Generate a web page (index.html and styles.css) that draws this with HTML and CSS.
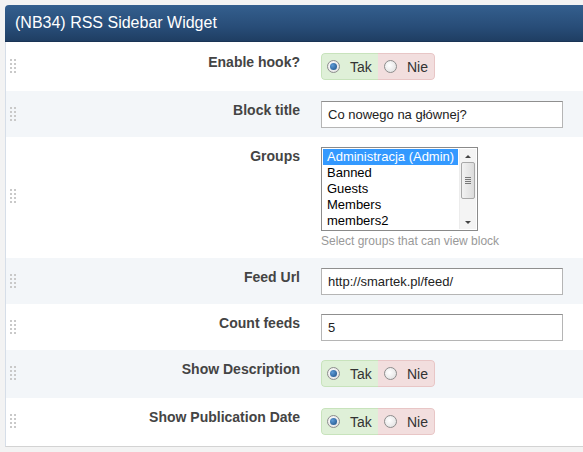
FILE: index.html
```html
<!DOCTYPE html>
<html>
<head>
<meta charset="utf-8">
<link rel="stylesheet" href="styles.css">
</head>
<body>
<div class="panel">
  <div class="header">(NB34) RSS Sidebar Widget</div>
  <div class="rows">
    <div class="row r-hook">
      <div class="handle"></div>
      <div class="label">Enable hook?</div>
      <div class="control">
        <div class="yesno">
          <span class="yes"><span class="radio on"></span>Tak</span>
          <span class="no"><span class="radio"></span>Nie</span>
        </div>
      </div>
    </div>
    <div class="row alt">
      <div class="handle"></div>
      <div class="label">Block title</div>
      <div class="control"><div class="input">Co nowego na głównej?</div></div>
    </div>
    <div class="row r-groups">
      <div class="handle mid"></div>
      <div class="label">Groups</div>
      <div class="control">
        <div class="listbox">
          <div class="options">
            <div class="opt sel">Administracja (Admin)</div>
            <div class="opt">Banned</div>
            <div class="opt">Guests</div>
            <div class="opt">Members</div>
            <div class="opt">members2</div>
          </div>
          <div class="scroll">
            <div class="arrow up"></div>
            <div class="thumb"><i></i><i></i><i></i><i></i></div>
            <div class="arrow down"></div>
          </div>
        </div>
        <div class="help">Select groups that can view block</div>
      </div>
    </div>
    <div class="row alt">
      <div class="handle"></div>
      <div class="label">Feed Url</div>
      <div class="control"><div class="input">http://smartek.pl/feed/</div></div>
    </div>
    <div class="row">
      <div class="handle"></div>
      <div class="label">Count feeds</div>
      <div class="control"><div class="input">5</div></div>
    </div>
    <div class="row alt r-tall">
      <div class="handle"></div>
      <div class="label">Show Description</div>
      <div class="control">
        <div class="yesno">
          <span class="yes"><span class="radio on"></span>Tak</span>
          <span class="no"><span class="radio"></span>Nie</span>
        </div>
      </div>
    </div>
    <div class="row r-tall">
      <div class="handle"></div>
      <div class="label">Show Publication Date</div>
      <div class="control">
        <div class="yesno">
          <span class="yes"><span class="radio on"></span>Tak</span>
          <span class="no"><span class="radio"></span>Nie</span>
        </div>
      </div>
    </div>
  </div>
</div>
</body>
</html>
```
FILE: styles.css
```css
html, body {
  margin: 0;
  padding: 0;
  overflow: hidden;
}
body {
  background: #f3f3f3;
  font-family: "Liberation Sans", Arial, sans-serif;
  font-size: 13px;
  color: #333;
  width: 583px;
  height: 452px;
  padding: 5px 0 0 5px;
  box-sizing: border-box;
}
.panel {
  width: 610px;
  background: #fff;
  border-left: 1px solid #d6dee8;
  border-bottom: 1px solid #d3d3d3;
  border-top-left-radius: 4px;
}
.header {
  height: 37px;
  box-sizing: border-box;
  padding: 8px 0 0 10px;
  background: linear-gradient(#345f8e, #284d78 60%, #1f3e63);
  border-bottom: 1px solid #1a3455;
  border-top-left-radius: 4px;
  color: #fff;
  font-size: 16px;
  line-height: 19px;
  margin-left: -1px;
}
.row {
  display: flex;
  align-items: flex-start;
  padding: 10px 0 9px 0;
  min-height: 27px;
  position: relative;
}
.row.r-hook { padding-top: 11px; padding-bottom: 11px; }
.row.alt { background: #f3f6f9; }
.row.r-groups { padding-bottom: 10px; }
.row.r-tall { padding-top: 10px; padding-bottom: 11px; }
.handle {
  width: 6px;
  height: 14px;
  margin: 6px 0 0 4px;
  background-image: radial-gradient(circle, #c9c9c9 0.9px, transparent 1.2px);
  background-size: 4px 4px;
  background-position: -1px -1px;
  flex: none;
}
.handle.mid { margin-top: 42px; }
.label {
  width: 284px;
  flex: none;
  text-align: right;
  font-weight: bold;
  font-size: 14px;
  color: #444;
  padding-top: 1px;
  line-height: 16px;
}
.control {
  margin-left: 21px;
}
.yesno {
  display: flex;
  height: 27px;
  box-sizing: border-box;
  border-radius: 4px;
  overflow: hidden;
  font-size: 14px;
  color: #333;
}
.yesno .yes, .yesno .no {
  display: flex;
  align-items: center;
  width: 57px;
  box-sizing: border-box;
}
.yesno .yes {
  background: #dff0d8;
  border: 1px solid #c8e3bc;
  border-right: none;
  border-radius: 4px 0 0 4px;
  padding-left: 5px;
}
.yesno .no {
  background: #f2dede;
  border: 1px solid #e8c6c6;
  border-left: none;
  border-radius: 0 4px 4px 0;
  padding-left: 6px;
}
.radio {
  width: 13px;
  height: 13px;
  box-sizing: border-box;
  border-radius: 50%;
  border: 1px solid #8d8d8d;
  background: radial-gradient(circle at 40% 40%, #fff, #dcdcdc);
  margin-right: 10px;
  position: relative;
  flex: none;
}
.radio.on::after {
  content: "";
  position: absolute;
  left: 2px;
  top: 2px;
  width: 7px;
  height: 7px;
  border-radius: 50%;
  background: radial-gradient(circle at 35% 35%, #5d9ad6, #1d4f86);
}
.input {
  width: 242px;
  height: 27px;
  box-sizing: border-box;
  border: 1px solid #b5b5b5;
  border-top-color: #8f8f8f;
  background: #fff;
  padding: 0 6px;
  line-height: 25px;
  font-size: 13px;
  color: #222;
}
.listbox {
  width: 157px;
  height: 84px;
  box-sizing: border-box;
  border: 1px solid #8a8a8a;
  background: #fff;
  display: flex;
  padding: 1px;
}
.options {
  flex: 1;
}
.opt {
  height: 16px;
  line-height: 16px;
  padding-left: 4px;
  font-size: 13px;
  color: #000;
  white-space: nowrap;
}
.opt.sel {
  background: #3399ff;
  color: #fff;
  margin-right: 1px;
}
.scroll {
  width: 16px;
  background: #f4f4f4;
  border-left: 1px solid #ececec;
  display: flex;
  flex-direction: column;
  align-items: center;
}
.arrow {
  width: 0;
  height: 0;
  border-left: 3px solid transparent;
  border-right: 3px solid transparent;
}
.arrow.up {
  border-bottom: 3px solid #444;
  margin-top: 6px;
}
.arrow.down {
  border-top: 3px solid #444;
  margin-top: auto;
  margin-bottom: 5px;
}
.thumb {
  width: 14px;
  height: 37px;
  margin-top: 4px;
  box-sizing: border-box;
  border: 1px solid #a8a8a8;
  border-radius: 2px;
  background: linear-gradient(90deg, #f2f2f2, #dcdcdc);
  display: flex;
  flex-direction: column;
  align-items: center;
  justify-content: center;
  gap: 1px;
}
.thumb i {
  display: block;
  width: 6px;
  height: 1px;
  background: #777;
}
.help {
  margin-top: 3px;
  font-size: 12px;
  color: #999;
  line-height: 14px;
}
```
